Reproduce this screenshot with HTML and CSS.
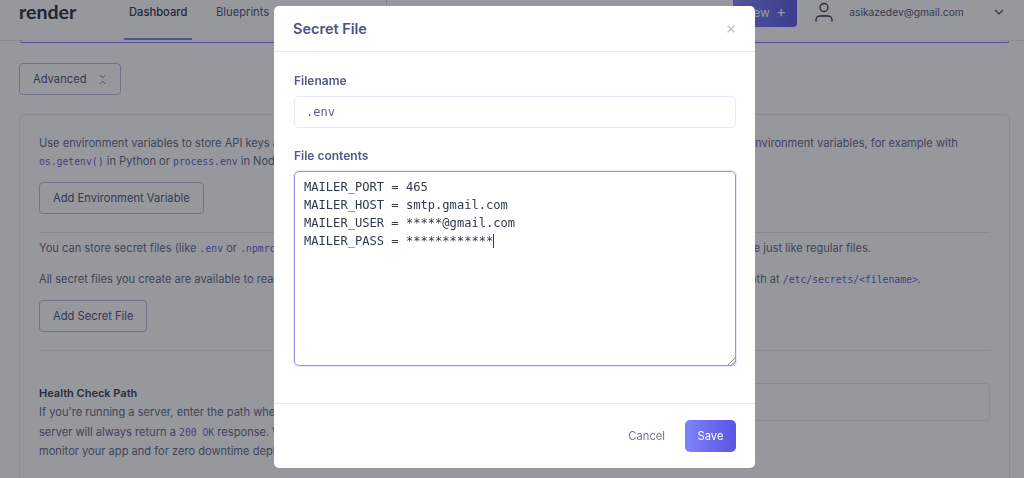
FILE: index.html
```html
<!DOCTYPE html>
<html lang="en">
<head>
<meta charset="utf-8">
<title>Secret File</title>
<link rel="stylesheet" href="styles.css">
</head>
<body>
<div class="page">
  <header class="topbar">
    <div class="logo">render</div>
    <nav class="nav">
      <a class="nav-item active">Dashboard</a>
      <a class="nav-item">Blueprints</a>
    </nav>
    <div class="nav-sep"></div>
    <a class="new-btn">New <span class="plus">+</span></a>
    <svg class="user-icon" viewBox="0 0 18 20" width="18" height="20" fill="none" stroke="#2d3348" stroke-width="1.3"><circle cx="9" cy="5.5" r="4"/><path d="M1 19.5v-1.5a4 4 0 0 1 4-4h8a4 4 0 0 1 4 4v1.5"/></svg>
    <span class="email">asikazedev@gmail.com</span>
    <svg class="chev" viewBox="0 0 10 6" width="10" height="6" fill="none" stroke="#3f4560" stroke-width="1.2"><path d="M1 1l4 4 4-4"/></svg>
  </header>
  <div class="prev-card"></div>
  <main class="content">
    <button class="btn adv">Advanced
      <svg class="adv-icon" viewBox="0 0 8 12" width="7" height="11" fill="none" stroke="#5f6583" stroke-width="1.1"><path d="M1 1l3 3 3-3M1 11l3-3 3 3"/></svg>
    </button>
    <section class="card">
      <p class="para tight">Use environment variables to store API keys and other secrets<span class="gap g1"></span>environment variables, for example with</p>
      <p class="para tight l2"><code>os.getenv()</code> in Python or <code>process.env</code> in Node.</p>
      <button class="btn env">Add Environment Variable</button>
      <hr class="rule r1">
      <p class="para"><span>You can store secret files (like <code>.env</code> or <code>.npmrc</code>) in Render</span><span class="gap g2"></span>runtime just like regular files.</p>
      <p class="para l4">All secret files you create are available to read<span class="gap g3"></span>path at <code>/etc/secrets/&lt;filename&gt;</code>.</p>
      <button class="btn secret">Add Secret File</button>
      <hr class="rule r2">
      <div class="health">
        <div class="health-text">
          <h4 class="health-title">Health Check Path</h4>
          <p class="para h-line">If you're running a server, enter the path where</p>
          <p class="para h-line">server will always return a <code>200 OK</code> response. We use it to</p>
          <p class="para h-line">monitor your app and for zero downtime deploys.</p>
        </div>
        <div class="health-input"></div>
      </div>
    </section>
  </main>
</div>

<div class="overlay">
  <div class="modal">
    <div class="modal-head">
      <h2 class="modal-title">Secret File</h2>
      <svg class="close" viewBox="0 0 8 8" width="8" height="8" fill="none" stroke="#b3b8cf" stroke-width="1.3"><path d="M.6.6l6.8 6.8M7.4.6L.6 7.4"/></svg>
    </div>
    <div class="modal-body">
      <label class="label">Filename</label>
      <div class="field">.env</div>
      <label class="label second">File contents</label>
      <div class="area">
<div>MAILER_PORT = 465</div>
<div>MAILER_HOST = smtp.gmail.com</div>
<div>MAILER_USER = *****@gmail.com</div>
<div>MAILER_PASS = ************<span class="caret"></span></div>
        <svg class="grip" viewBox="0 0 8 8" width="8" height="8" fill="none" stroke="#8b8b8b" stroke-width="1"><path d="M1 8l7-7M4.5 8L8 4.5"/></svg>
      </div>
    </div>
    <div class="modal-foot">
      <a class="cancel">Cancel</a>
      <a class="save">Save</a>
    </div>
  </div>
</div>
</body>
</html>
```
FILE: styles.css
```css
* { box-sizing: border-box; }
html, body { margin: 0; height: 478px; overflow: hidden; }
body { font-family: Inter, "Liberation Sans", sans-serif; background: #fff; color: #4b5173; }
.page { height: 478px; overflow: hidden; background: #fdfdfe; }

.topbar { height: 41px; display: flex; align-items: flex-start; border-bottom: 1px solid #e6e8f0; padding-left: 19px; }
.logo { font: 700 19.5px/21px Lato, sans-serif; color: #252a40; width: 105px; margin-top: 1px; }
.nav { display: flex; height: 40px; }
.nav-item { font-size: 11.2px; line-height: 14px; padding: 5px 5px 0; color: #4b5173; }
.nav-item.active { width: 68px; font-weight: 500; color: #2c3148; border-bottom: 2px solid #7a7eea; margin-right: 19px; }
.nav-sep { width: 1px; height: 6px; background: #d8dbe8; margin-left: 112px; }
.new-btn { width: 64px; height: 27px; margin-left: 346px; background: linear-gradient(90deg, #7c83f8, #5a55e6); border-radius: 0 0 4px 4px; color: #fff; font-size: 12px; line-height: 24px; text-align: center; }
.plus { font-size: 15px; margin-left: 3px; }
.user-icon { margin: 2px 0 0 18px; }
.email { font-size: 10.3px; line-height: 24px; margin-left: 16px; color: #4b5173; }
.chev { margin: 9px 0 0 30px; }

.prev-card { height: 2px; margin: 0 15px 0 20px; border: 1px solid #7a7eea; border-top: 0; border-radius: 0 0 5px 5px; }
.content { padding: 20px 14px 0 19px; }

.btn { display: flex; align-items: center; height: 32px; padding: 0 13px; background: transparent; border: 1px solid #b6bad6; border-radius: 4px; font: 400 11.2px Inter, sans-serif; color: #4b5173; white-space: nowrap; }
.adv { gap: 12px; width: 102px; }
.card { height: 420px; margin-top: 19px; border: 1px solid #e6e8f4; border-radius: 6px; padding: 19px; }
.para { margin: 0; font-size: 11.1px; line-height: 20px; white-space: nowrap; color: #5f6583; }
.para.tight { line-height: 18px; }
code { font: 9.75px "DejaVu Sans Mono", monospace; color: #5a5fd0; }
.gap { display: inline-block; }
.g1 { width: 384px; }
.g2 { width: 388px; }
.g3 { width: 463px; }
.l2 { margin-bottom: 12px; }
.env { width: 165px; }
.rule { height: 1px; border: 0; background: #e6e8f0; margin: 18px 0 0; }
.r1 { margin-bottom: 5px; }
.l4 { margin-top: 11px; }
.secret { width: 108px; margin-top: 11px; }
.health { display: grid; grid-template-columns: 1fr 490px; margin-top: 32px; }
.health-title { margin: 0; font-size: 11px; line-height: 20px; font-weight: 600; color: #343a52; }
.para.h-line { line-height: 19.5px; }
.health-input { height: 38px; border: 1px solid #e6e8f4; border-radius: 4px; }

.overlay { position: fixed; inset: 0; background: rgba(26, 28, 40, .45); display: flex; justify-content: center; padding: 6px 0 0 5px; }
.modal { width: 481px; height: 462px; background: #fff; border-radius: 5px; display: flex; flex-direction: column; }
.modal-head { height: 46px; display: flex; align-items: center; justify-content: space-between; padding: 0 20px 0 19px; border-bottom: 1px solid #e4e7f3; flex: none; }
.modal-title { margin: 0; font-size: 14.5px; font-weight: 600; color: #4c5380; }
.modal-body { padding: 21px 19px 0 20px; height: 351px; flex: none; }
.label { display: block; font-size: 12px; line-height: 16px; font-weight: 600; color: #535a85; margin-bottom: 7px; }
.label.second { margin: 20px 0 7px; }
.field { height: 32px; border: 1px solid #e4e7fa; border-radius: 5px; padding: 0 11px; font: 12px/30px "DejaVu Sans Mono", monospace; color: #5a6080; }
.area { position: relative; height: 195px; border: 1px solid #8f96f0; box-shadow: 0 0 0 1px rgba(143, 150, 240, .25); border-radius: 5px; padding: 6px 9px; font: 12.1px/18px "DejaVu Sans Mono", monospace; color: #2f3a4a; }
.caret { display: inline-block; width: 1px; height: 14px; background: #2f3a4a; vertical-align: -3px; }
.grip { position: absolute; right: 0; bottom: 0; }
.modal-foot { flex: none; height: 65px; border-top: 1px solid #e4e7f3; display: flex; align-items: center; justify-content: flex-end; padding: 0 19px 0 0; }
.cancel { font-size: 11.2px; color: #6f7595; margin-right: 20px; }
.save { width: 51px; height: 32px; border-radius: 5px; background: linear-gradient(90deg, #7c83f8, #5a55e6); color: #fff; font-size: 11.2px; line-height: 32px; text-align: center; }
```
